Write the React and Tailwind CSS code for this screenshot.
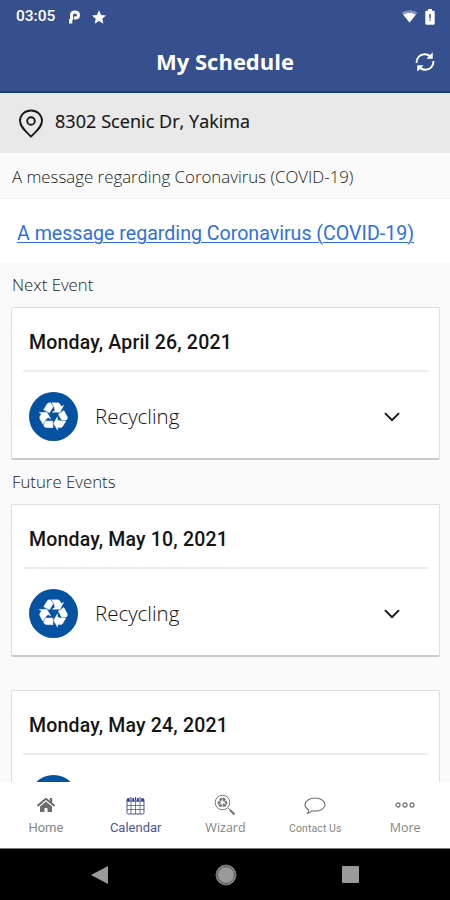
import React from 'react';
import { FaHome } from 'react-icons/fa';

const events = [
  { section: 'Next Event', date: 'Monday, April 26, 2021', type: 'Recycling' },
  { section: 'Future Events', date: 'Monday, May 10, 2021', type: 'Recycling' },
  { section: null, date: 'Monday, May 24, 2021', type: 'Recycling' },
];

const StatusBar = () => (
  <div className="flex h-8 items-center pl-4 pr-[15px] pt-px text-white">
    <span className="w-[40px] pt-px text-[15.5px] font-medium font-['Roboto',sans-serif]">03:05</span>
    <svg className="ml-[12px] h-[14px] w-[13px]" viewBox="0 0 13 14" fill="none" stroke="currentColor">
      <path d="M3.500 5.500C3.500 3 4.800 2 6.900 2S10.500 3.200 10.500 5 9.300 8 7.200 8H5.800" strokeWidth="3" />
      <path d="M2.700 9v4.500" strokeWidth="3.200" />
      <path d="M3.500 5v5" strokeWidth="3" />
    </svg>
    <svg className="ml-[11px] h-[14px] w-[14px]" viewBox="0 0 24 24" fill="currentColor">
      <path d="M12 .6l3.500 7.900 8.500.8-6.400 5.700 1.900 8.400L12 19l-7.500 4.400L6.400 15 0 9.300l8.500-.8z" />
    </svg>
    <svg className="ml-auto h-[13px] w-[17px]" viewBox="0 0 17 13" fill="currentColor">
      <path d="M.5 2.800C5 -.6 12 -.6 16.500 2.800L8.500 12.500z" opacity="0.4" />
      <path d="M2.300 4.700c3.700-2.200 8.700-2.200 12.400 0L8.500 12.500z" />
    </svg>
    <svg className="ml-[7px] h-[16px] w-[10px]" viewBox="0 0 10 16">
      <path d="M3 0h4v1.700h1.600c.7 0 1.100.4 1.100 1.100v11.800c0 .7-.4 1.100-1.100 1.100H1.400c-.7 0-1.100-.4-1.100-1.100V2.800c0-.7.4-1.100 1.100-1.100H3z" fill="#fff" />
      <path d="M5 5v4.500M5 10.500v1.300" stroke="#364f8d" strokeWidth="1.500" />
    </svg>
  </div>
);

// one folded arrow, turned three times around the centre
const RecycleArrows = () =>
  [0, 120, 240].map((angle) => (
    <g key={angle} transform={`rotate(${angle})`}>
      <path d="M-9.900-6.300L-6.400-12Q-5.600-13.200-4.200-13.200H-3L-.4-9.200L-4-3.200z" />
      <path d="M-1.800-13.200H4.200Q5.600-13.200 6.300-12L7.900-9.400L10.200-10.700L6.600-3.800H-1.200L1.400-5.400L.8-8.400z" />
    </g>
  ));

const RecycleIcon = () => (
  <svg className="h-[29px] w-[29px]" viewBox="-14.5 -14 29 29" fill="#fff" stroke="#fff" strokeWidth=".4">
    <RecycleArrows />
  </svg>
);

const EventCard = ({ event }) => (
  <div className="h-[153px] shrink-0 rounded-[2px] border border-b-2 border-[#dedede] border-b-[#cbcbcb] bg-white px-[11px]">
    <div className="flex h-[64px] items-center border-b-2 border-[#ededed] pl-[6px] pt-[7px]">
      <h3 className="text-[19.5px] font-medium tracking-[0.18px] text-[#151515] font-['Roboto',sans-serif]">{event.date}</h3>
    </div>
    <div className="flex h-[88px] items-center pl-[6px] pr-[28px]">
      <div className="flex h-[49px] w-[49px] items-center justify-center rounded-full bg-[#0552a0]">
        <RecycleIcon />
      </div>
      <span className="ml-[17px] pt-px text-[20.5px] font-light text-[#111]">{event.type}</span>
      <svg className="ml-auto mt-[2px] h-[10px] w-[16px]" viewBox="0 0 16 10" fill="none" stroke="#111" strokeWidth="1.900">
        <path d="M1 1.200l7 7 7-7" />
      </svg>
    </div>
  </div>
);

const CalendarIcon = () => (
  <svg className="h-[19px] w-[19px]" viewBox="0 0 19 19" fill="none" stroke="#36458c">
    <rect x="1" y="2.500" width="17" height="15.500" rx="1.500" strokeWidth=".9" />
    <path d="M1 4.200h17" strokeWidth="3" />
    <path d="M5 1v3.500M9.500 1v3.500M14 1v3.500" stroke="#fff" strokeWidth="2.500" />
    <path d="M5 1v3.500M9.500 1v3.500M14 1v3.500" />
    <path d="M1 9.500h17M1 13.500h17M5 6v12M9.500 6v12M14 6v12" strokeWidth=".7" />
  </svg>
);

const WizardIcon = () => (
  <svg className="h-[22px] w-[22px]" viewBox="0 0 22 22" fill="none" stroke="#777">
    <circle cx="8.500" cy="8.500" r="7.300" />
    <path d="M14 14l2 2" />
    <path d="M16 16l4.500 4.500" strokeWidth="2.200" />
    <g transform="translate(8.5 8.500) scale(.36)" fill="#777" stroke="none">
      <RecycleArrows />
    </g>
  </svg>
);

const ChatIcon = () => (
  <svg className="mt-[2px] h-[18px] w-[22px]" viewBox="0 0 22 18" fill="none" stroke="#777" strokeWidth="1.200">
    <path d="M4.500 12.700C2.300 11.500 1 9.700 1 7.600 1 4 5.500 1 11 1s10 3 10 6.600-4.500 6.600-10 6.600c-1.200 0-2.300-.1-3.300-.4-1.300 1.600-2.700 2.500-4.200 2.700.8-1.200 1.200-2.400 1-3.800z" />
  </svg>
);

const MoreIcon = () => (
  <svg className="h-[8px] w-[20px]" viewBox="0 0 20 8" fill="none" stroke="#777" strokeWidth="1.300">
    <circle cx="3" cy="4" r="2" />
    <circle cx="10" cy="4" r="2" />
    <circle cx="17" cy="4" r="2" />
  </svg>
);

const tabs = [
  { name: 'Home', icon: <FaHome size={18} color="#6c6c6c" />, label: "pt-px text-[13px] font-['Roboto',sans-serif]" },
  { name: 'Calendar', icon: <CalendarIcon />, label: "pt-px text-[13px] text-[#4a5796] font-['Roboto',sans-serif]" },
  { name: 'Wizard', icon: <WizardIcon />, label: 'pt-[2px] text-[12.5px]' },
  { name: 'Contact Us', icon: <ChatIcon />, label: "pt-[3px] text-[10.5px] leading-[17px] tracking-[0.1px] font-['Roboto',sans-serif]" },
  { name: 'More', icon: <MoreIcon />, label: 'pt-[2px] text-[12.5px]' },
];

const App = () => {
  return (
    <div className="flex h-[900px] w-[450px] flex-col overflow-hidden bg-[#fafafa] font-['Open_Sans',sans-serif]">
      <header className="h-[93px] shrink-0 border-b-2 border-[#12407f] bg-[#364f8d]">
        <StatusBar />
        <div className="grid h-[59px] grid-cols-[1fr_auto_1fr] items-center">
          <span />
          <h1 className="text-[22px] font-bold text-white">My Schedule</h1>
          <svg className="ml-auto mr-[15px] h-[20px] w-[20px]" viewBox="0 0 20 20" fill="none" stroke="#fff" strokeWidth="1.900">
            <path d="M1.500 11C1.500 5.500 5 2.200 9.500 2.200c2.800 0 4.900 1 6.500 2.800M18.500 9c0 5.500-3.500 8.800-8 8.800-2.800 0-4.900-1-6.500-2.800" />
            <path d="M17.500.8v5.600h-5.600zM2.500 19.200v-5.600h5.600z" fill="#fff" strokeWidth=".5" />
          </svg>
        </div>
      </header>

      <div className="flex h-[60px] shrink-0 items-center bg-[#e9e9e9] pl-[18px]">
        <svg className="h-[29px] w-[26px]" viewBox="0 0 26 29" fill="none" stroke="#1a1a1a" strokeWidth="1.900">
          <path d="M13 27.500C8 22.500 2 18 2 11.800 2 5.800 7 1.500 13 1.500s11 4.300 11 10.300C24 18 18 22.500 13 27.500z" />
          <circle cx="13" cy="12" r="3.800" />
        </svg>
        <span className="ml-[11px] pb-[4px] text-[18px] tracking-[0.06px] text-[#151515] [-webkit-text-stroke:0.2px_#151515]">8302 Scenic Dr, Yakima</span>
      </div>

      <main className="min-h-0 flex-1 overflow-hidden">
        <div className="flex h-[46px] items-center border-b border-[#f4f4f4] pl-[12px] pt-[2px] text-[16.85px] font-light text-[#222]">
          A message regarding Coronavirus (COVID-19)
        </div>
        <div className="flex h-[64px] items-center bg-white pl-[17px] pt-[5px]">
          <a href="#" className="text-[19.6px] text-[#2f6fe0] underline decoration-1 underline-offset-2 font-['Roboto',sans-serif]">
            A message regarding Coronavirus (COVID-19)
          </a>
        </div>
        <div className="pl-[11px] pr-[10px]">
          {events.map((event) => (
            <section key={event.date}>
              <h2 className={event.section ? 'flex h-[44px] items-center pl-px text-[16.8px] font-light text-[#222]' : 'h-[33px]'}>
                {event.section}
              </h2>
              <EventCard event={event} />
            </section>
          ))}
        </div>
      </main>

      <nav className="grid h-[66px] shrink-0 grid-cols-5 bg-white pl-px text-[#858585]">
        {tabs.map((tab) => (
          <button key={tab.name} className="flex flex-col items-center pt-[11px]">
            <span className="flex h-[24px] items-center">{tab.icon}</span>
            <span className={tab.label}>{tab.name}</span>
          </button>
        ))}
      </nav>

      <footer className="flex h-[52px] shrink-0 items-center justify-between border-t border-[#777] bg-black px-[91px]">
        <svg className="h-[20px] w-[18px]" viewBox="0 0 18 20" fill="#9a9a9a">
          <path d="M0 10L17 1v18z" />
        </svg>
        <svg className="h-[22px] w-[22px]" viewBox="0 0 22 22">
          <circle cx="11" cy="11" r="10" fill="#9a9a9a" stroke="#777" />
          <circle cx="11" cy="11" r="8.500" fill="none" stroke="#555" />
        </svg>
        <span className="h-[17px] w-[17px] rounded-[1px] bg-[#9a9a9a]" />
      </footer>
    </div>
  );
};
export default App;
